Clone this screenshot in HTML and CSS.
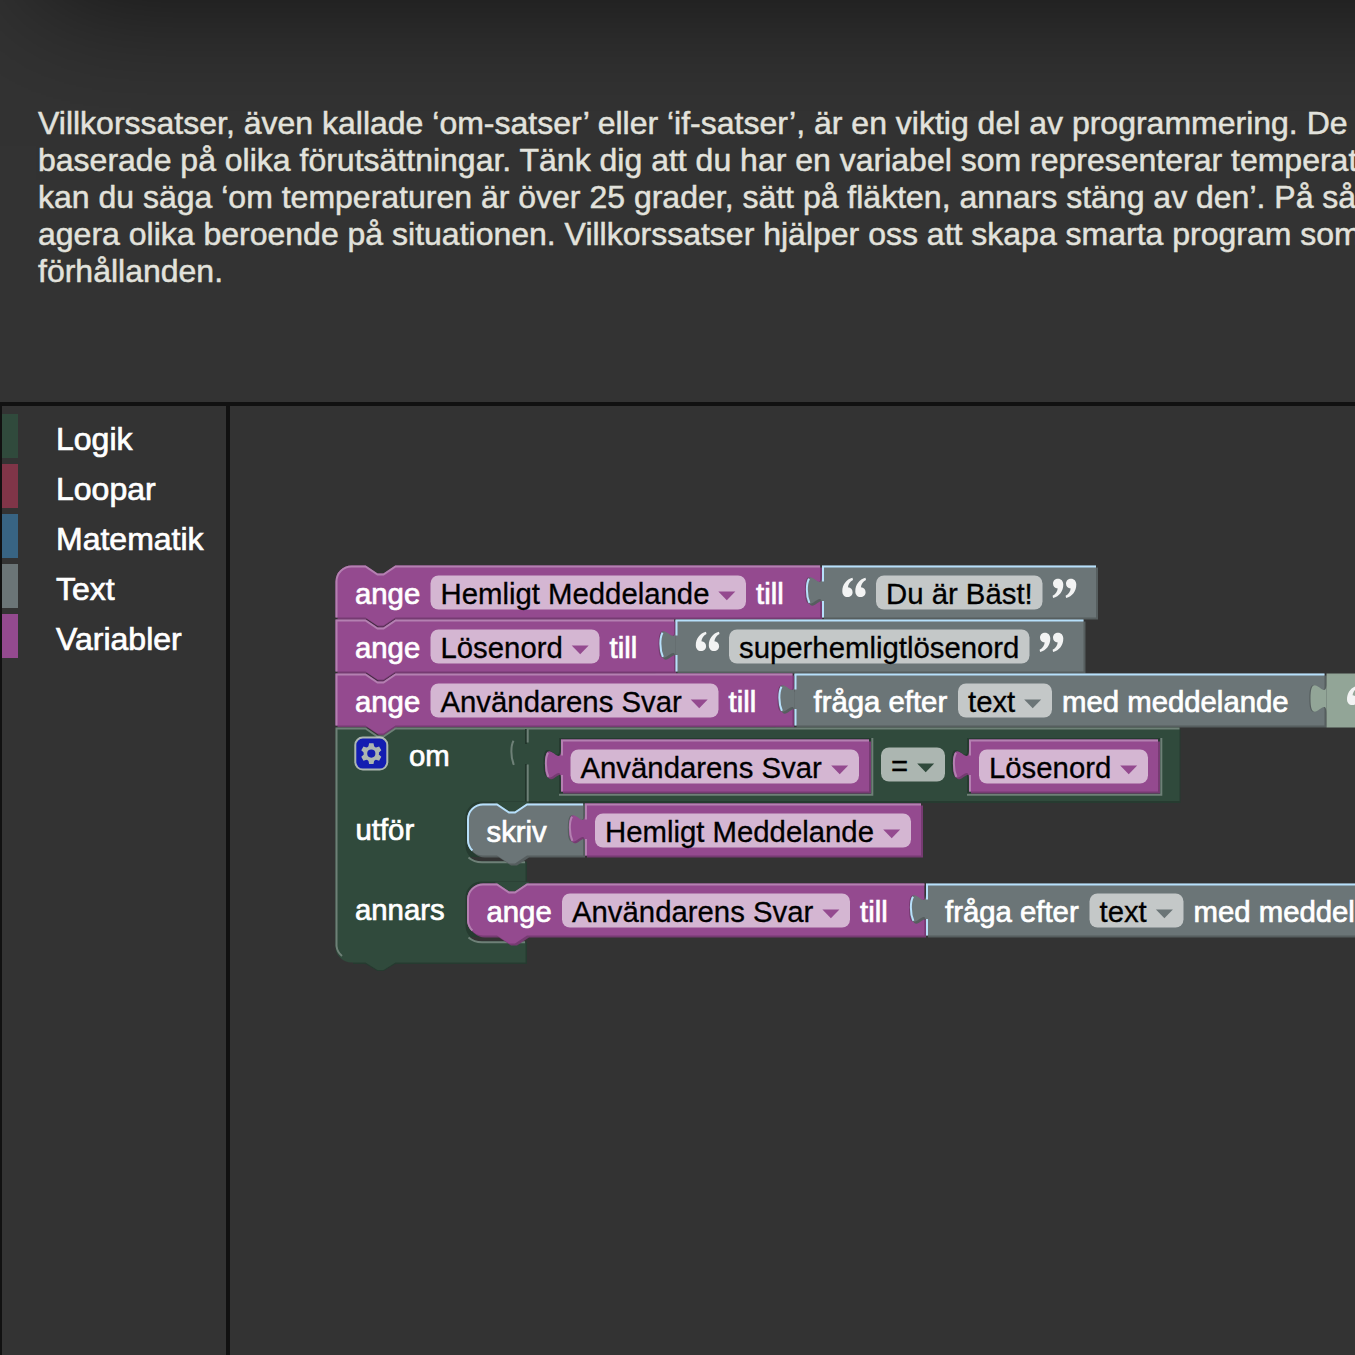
FILE: index.html
```html
<!DOCTYPE html>
<html lang="sv">
<head>
<meta charset="utf-8">
<title>Villkorssatser</title>
<link rel="stylesheet" href="styles.css">
</head>
<body>
<header class="intro">
  <p class="intro-text">Villkorssatser, även kallade ‘om-satser’ eller ‘if-satser’, är en viktig del av programmering. De<br>baserade på olika förutsättningar. Tänk dig att du har en variabel som representerar temperat<br>kan du säga ‘om temperaturen är över 25 grader, sätt på fläkten, annars stäng av den’. På så<br>agera olika beroende på situationen. Villkorssatser hjälper oss att skapa smarta program som<br>förhållanden.</p>
</header>
<main class="editor">
  <nav class="toolbox">
    <div class="category logic">Logik</div>
    <div class="category loops">Loopar</div>
    <div class="category math">Matematik</div>
    <div class="category strings">Text</div>
    <div class="category variables">Variabler</div>
  </nav>
  <svg class="workspace" viewBox="230 406 1125 949" width="1125" height="949">
    <defs>
      <path id="arrow" d="M0,0H17L8.5,8.7Z"/>
      <g id="quote">
        <path id="mark" d="M10.200,0C4,1.500,0,7,0,13.500C0,17,2.200,19.300,5.200,19.300C8.200,19.300,10.300,17.300,10.300,14.400C10.300,11.700,8.500,9.700,5.600,9.500C6,6.200,7.800,3.700,10.700,2.200Z"/>
        <use href="#mark" x="13"/>
      </g>
      <!-- left side of a value block: straight edges and the outer curve of the tab -->
      <path id="tab-light" d="M.5,26V17.800M.5,8V.5M-6.300,18.700C-8,15,-7.900,9,-6.500,6.600"/>
      <path id="tab" d="M0,5c0,10 -8,-8 -8,7.500s8,-2.500 8,7.500z"/>
    </defs>

    <!-- ange Hemligt Meddelande -->
    <g transform="translate(335.500 565.500) scale(2)">
      <path class="purple-dark" d="M1,20H243.300V27H31l-6,4h-3l-6,-4H1Z"/>
      <path class="purple-dark" d="M230,1H243.300V27H230Z"/>
      <path class="purple" d="M0,8A8,8 0 0 1 8,0H15l6,4h3l6,-4H242.300V26H30l-6,4h-3l-6,-4H0Z"/>
      <path class="line purple-line" d="M.5,26V8A7.500,7.500 0 0 1 8,.5H15l6,4h3l6,-4H242.300"/>
    </g>
    <g transform="translate(822 565.500) scale(2)">
      <use href="#tab" class="purple-dark" x="-.5" y="0"/>
      <path class="gray-dark" d="M1,1H138V27H1Z"/><use href="#tab" class="gray-dark" x="1" y="1"/>
      <path class="gray" d="M0,0H137V26H0Z"/><use href="#tab" class="gray"/>
      <path class="line gray-line" d="M0,.5H137"/><use href="#tab-light" class="line gray-line"/>
    </g>
    <!-- ange Lösenord -->
    <g transform="translate(335.500 619.500) scale(2)">
      <path class="purple-dark" d="M1,20H170.300V27H31l-6,4h-3l-6,-4H1Z"/>
      <path class="purple-dark" d="M160,1H170.300V27H160Z"/>
      <path class="seam" d="M15,0l6,4h3l6,-4"/>
      <path class="purple" d="M0,0H15l6,4h3l6,-4H169.300V26H30l-6,4h-3l-6,-4H0Z"/>
      <path class="line purple-line" d="M.5,26V.5H15l6,4h3l6,-4H169.300"/>
    </g>
    <g transform="translate(675.500 619.500) scale(2)">
      <use href="#tab" class="purple-dark" x="-.5" y="0"/>
      <path class="gray-dark" d="M1,1H205V27H1Z"/><use href="#tab" class="gray-dark" x="1" y="1"/>
      <path class="gray" d="M0,0H204V26H0Z"/><use href="#tab" class="gray"/>
      <path class="line gray-line" d="M0,.5H204"/><use href="#tab-light" class="line gray-line"/>
    </g>
    <!-- ange Användarens Svar -->
    <g transform="translate(335.500 673.500) scale(2)">
      <path class="purple-dark" d="M1,20H229.300V27H31l-6,4h-3l-6,-4H1Z"/>
      <path class="purple-dark" d="M220,1H229.300V27H220Z"/>
      <path class="seam" d="M15,0l6,4h3l6,-4"/>
      <path class="purple" d="M0,0H15l6,4h3l6,-4H228.500V26H30l-6,4h-3l-6,-4H0Z"/>
      <path class="line purple-line" d="M.5,26V.5H15l6,4h3l6,-4H228.500"/>
    </g>
    <g transform="translate(794.500 673.500) scale(2)">
      <use href="#tab" class="purple-dark" x="-.5" y="0"/>
      <path class="gray-dark" d="M1,1H266V27H1Z"/><use href="#tab" class="gray-dark" x="1" y="1"/>
      <path class="gray" d="M0,0H265V26H0Z"/><use href="#tab" class="gray"/>
      <path class="line gray-line" d="M0,.5H265"/><use href="#tab-light" class="line gray-line"/>
    </g>
    <g transform="translate(1326.500 673.500) scale(2)">
      <use href="#tab" class="gray-dark" x="-.6" y="0"/>
      <path class="shadow-block" d="M0,0H20V27H0Z"/><use href="#tab" class="shadow-block"/>
    </g>

    <!-- om / utför / annars -->
    <path class="green-dark" d="M1100,729.500H1180.500V803H527V964H395.500l-12,7h-6l-12,-7H353V800H1100Z"/>
    <path class="green" d="M335.500,727.500H365.500l12,8h6l12,-8H1179.500V801H525.500V962.500H395.500l-12,7.500h-6l-12,-7.500H351.500A16,16 0 0 1 335.500,946.500Z"/>
    <path class="line2 green-line" d="M342,956A15,15 0 0 1 336.500,946V728.500H365.500l12,8h6l12,-8H1179.500"/>
    <path class="seam2" d="M526,729V744M526,764V801"/>
    <g transform="translate(526.500 727.500) scale(2)">
      <path class="line green-line" d="M.6,37V18.500M.6,7.500V.5M-6.300,18.700C-8,15,-7.900,9,-6.500,6.600"/>
    </g>

    <path class="green-dark" d="M559,738H873V795H559Z"/>
    <path class="line2 green-line" d="M559,794.800H872.300V738"/>
    <path class="green-dark" d="M967,738H1162V795H967Z"/>
    <path class="line2 green-line" d="M967,794.800H1161.300V738"/>
    <g transform="translate(561 739.500) scale(2)">
      <use href="#tab" class="green-dark" x="-.8" y="-.6"/>
      <path class="purple-dark" d="M1,1H155V27H1Z"/><use href="#tab" class="purple-dark" x=".8" y=".8"/>
      <path class="purple" d="M0,0H154V26H0Z"/><use href="#tab" class="purple"/>
      <path class="line purple-line" d="M0,.5H154"/><use href="#tab-light" class="line purple-line"/>
    </g>
    <g transform="translate(969 739.500) scale(2)">
      <use href="#tab" class="green-dark" x="-.8" y="-.6"/>
      <path class="purple-dark" d="M1,1H95.500V27H1Z"/><use href="#tab" class="purple-dark" x=".8" y=".8"/>
      <path class="purple" d="M0,0H94.500V26H0Z"/><use href="#tab" class="purple"/>
      <path class="line purple-line" d="M0,.5H94.500"/><use href="#tab-light" class="line purple-line"/>
    </g>

    <!-- statement inputs -->
    <g id="slot">
      <path class="green-dark" d="M525.500,801.500H482A16,16 0 0 0 465.500,818V846A16,16 0 0 0 482,861.500H525.500Z"/>
      <path class="hole" d="M527,857H470Q474,861.500 484,861.500H527Z"/>
      <path class="line2 green-line" d="M468.500,857.500Q474,862.300 482,862.300H525"/>
      <path class="green" d="M495,802H529V810L512,814L497,806Z"/>
    </g>
    <use href="#slot" y="80"/>

    <g transform="translate(467 803.500) scale(2)">
      <path class="gray-dark" d="M1,18H59V27H31l-6,4h-3l-6,-4H9A8,8 0 0 1 1,19Z"/>
      <path class="gray" d="M0,8A8,8 0 0 1 8,0H15l6,4h3l6,-4H58V26H30l-6,4h-3l-6,-4H8A8,8 0 0 1 0,18Z"/>
      <path class="line gray-line" d="M2.700,23.500A7.500,7.500 0 0 1 .5,18V8A7.500,7.500 0 0 1 8,.5H15l6,4h3l6,-4H58"/>
    </g>
    <g transform="translate(585 803.500) scale(2)">
      <path class="gray-dark" d="M-1,0H0V26H-1Z"/>
      <use href="#tab" class="gray-dark" x="-.6" y="0"/>
      <path class="purple-dark" d="M1,1H169V27H1Z"/><use href="#tab" class="purple-dark" x=".8" y=".8"/>
      <path class="purple" d="M0,0H168V26H0Z"/><use href="#tab" class="purple"/>
      <path class="line purple-line" d="M0,.5H168"/><use href="#tab-light" class="line purple-line"/>
    </g>
    <g transform="translate(467 883.500) scale(2)">
      <path class="purple-dark" d="M1,18H229.500V27H31l-6,4h-3l-6,-4H9A8,8 0 0 1 1,19Z"/>
      <path class="purple" d="M0,8A8,8 0 0 1 8,0H15l6,4h3l6,-4H228.700V26H30l-6,4h-3l-6,-4H8A8,8 0 0 1 0,18Z"/>
      <path class="line purple-line" d="M2.700,23.500A7.500,7.500 0 0 1 .5,18V8A7.500,7.500 0 0 1 8,.5H15l6,4h3l6,-4H228.700"/>
    </g>
    <g transform="translate(926 883.500) scale(2)">
      <use href="#tab" class="purple-dark" x="-.5" y="0"/>
      <path class="gray-dark" d="M1,1H220V27H1Z"/><use href="#tab" class="gray-dark" x="1" y="1"/>
      <path class="gray" d="M0,0H220V26H0Z"/><use href="#tab" class="gray"/>
      <path class="line gray-line" d="M0,.5H220"/><use href="#tab-light" class="line gray-line"/>
    </g>

    <!-- mutator icon -->
    <g class="mutator">
      <rect class="mutator-box" x="355.300" y="737.600" width="32" height="32" rx="7.500"/>
      <g transform="translate(371.300 753.600)">
        <circle class="gear-ring" r="5.900"/>
        <g id="teeth"><path d="M-3,-6.500L-2.200,-10.300H2.200L3,-6.500ZM-3,6.500L-2.200,10.300H2.200L3,6.500Z"/></g>
        <use href="#teeth" transform="rotate(60)"/>
        <use href="#teeth" transform="rotate(120)"/>
      </g>
    </g>

    <!-- editable fields -->
    <g class="chips">
      <rect x="430.500" y="575.500" width="315.500" height="34" rx="8"/>
      <rect x="876" y="575.500" width="166.500" height="34" rx="8"/>
      <rect x="430.500" y="629.500" width="169" height="34" rx="8"/>
      <rect x="729" y="629.500" width="300.500" height="34" rx="8"/>
      <rect x="430.500" y="683.500" width="288" height="34" rx="8"/>
      <rect x="958" y="683.500" width="94" height="34" rx="8"/>
      <rect x="570.500" y="749.500" width="288.500" height="34" rx="8"/>
      <rect x="881" y="747.500" width="64" height="34" rx="8"/>
      <rect x="979" y="749.500" width="169" height="34" rx="8"/>
      <rect x="595" y="813.500" width="316" height="34" rx="8"/>
      <rect x="562" y="893.500" width="288" height="34" rx="8"/>
      <rect x="1089.500" y="893.500" width="94" height="34" rx="8"/>
    </g>
    <g class="purple">
      <use href="#arrow" x="718.300" y="591.500"/><use href="#arrow" x="571.700" y="645.500"/>
      <use href="#arrow" x="690.700" y="699.500"/><use href="#arrow" x="831.200" y="765.500"/>
      <use href="#arrow" x="1120.200" y="765.500"/><use href="#arrow" x="883.200" y="829.500"/>
      <use href="#arrow" x="822.400" y="909.500"/>
    </g>
    <g class="gray"><use href="#arrow" x="1024.200" y="699.500"/><use href="#arrow" x="1155.900" y="909.500"/></g>
    <use href="#arrow" class="green" x="917.200" y="763.500"/>
    <g class="quotes">
      <use href="#quote" x="842.300" y="577.800"/><use href="#quote" x="695.800" y="631.800"/><use href="#quote" x="1347" y="685.800"/>
      <use href="#quote" transform="translate(1076.300 598) rotate(180)"/>
      <use href="#quote" transform="translate(1063.300 652) rotate(180)"/>
    </g>

    <g class="label">
      <text x="355" y="603.500">ange</text><text x="756" y="603.500">till</text>
      <text x="355" y="657.500">ange</text><text x="609.500" y="657.500">till</text>
      <text x="355" y="711.500">ange</text><text x="728.500" y="711.500">till</text>
      <text x="813.500" y="711.500">fråga efter</text><text x="1062" y="711.500">med meddelande</text>
      <text x="409" y="765.500">om</text><text x="355.500" y="839.500">utför</text><text x="355" y="919.500">annars</text>
      <text x="486.500" y="841.500">skriv</text>
      <text x="486.500" y="921.500">ange</text><text x="860" y="921.500">till</text>
      <text x="945" y="921.500">fråga efter</text><text x="1193.500" y="921.500">med meddelande</text>
    </g>
    <g class="value">
      <text x="440.500" y="603.500">Hemligt Meddelande</text><text x="886" y="603.500">Du är Bäst!</text>
      <text x="440.500" y="657.500">Lösenord</text><text x="739" y="657.500">superhemligtlösenord</text>
      <text x="440.500" y="711.500">Användarens Svar</text><text x="968" y="711.500">text</text>
      <text x="580.500" y="777.500">Användarens Svar</text><text x="891" y="775.500">=</text><text x="989" y="777.500">Lösenord</text>
      <text x="605" y="841.500">Hemligt Meddelande</text>
      <text x="572" y="921.500">Användarens Svar</text><text x="1099.500" y="921.500">text</text>
    </g>
  </svg>
</main>
</body>
</html>
```
FILE: styles.css
```css
* { box-sizing: border-box; }
body {
  margin: 0;
  width: 1355px;
  height: 1355px;
  overflow: hidden;
  background: #333;
  font-family: "Liberation Sans", Arial, sans-serif;
}
.intro {
  position: relative;
  height: 402px;
  padding: 105px 0 0 38px;
  overflow: hidden;
}
.intro::before {
  content: "";
  position: absolute;
  left: 36px;
  top: -400px;
  width: 2400px;
  height: 400px;
  box-shadow: 0 0 120px rgba(0, 0, 0, 0.66);
}
.intro-text {
  position: relative;
  margin: 0;
  color: #e2e2dc;
  font-size: 32px;
  line-height: 37px;
  white-space: nowrap;
  -webkit-text-stroke: 0.5px #e2e2dc;
}
.editor {
  display: flex;
  height: 953px;
  border-top: 4px solid #111;
  border-left: 2px solid #111;
}
.toolbox {
  flex: 0 0 228px;
  display: flex;
  flex-direction: column;
  gap: 6px;
  padding-top: 8px;
  border-right: 4px solid #111;
}
.category {
  height: 44px;
  padding-left: 38px;
  border-left: 16px solid;
  color: #fff;
  font-size: 32px;
  line-height: 50px;
  -webkit-text-stroke: 0.7px #fff;
}
.logic { border-left-color: #304a3c; }
.loops { border-left-color: #803548; }
.math { border-left-color: #386483; }
.strings { border-left-color: #6b7577; }
.variables { border-left-color: #944a8f; }
.workspace { flex: none; display: block; }

.purple { fill: #944a8f; }
.purple-dark { fill: #763b72; }
.gray { fill: #6b7577; }
.gray-dark { fill: #565e5f; }
.green { fill: #304a3c; }
.green-dark { fill: #263b30; }
.shadow-block { fill: #92a597; }
.hole { fill: #333; }
.line { fill: none; stroke-width: 1; }
.line2 { fill: none; stroke-width: 2; }
.purple-line { stroke: #b480b1; }
.gray-line { stroke: #b7e0fb; }
.green-line { stroke: #6e8077; }
.seam { fill: none; stroke: #4d2b4b; stroke-width: 1; }
.seam2 { fill: none; stroke: #22352b; stroke-width: 2; }
.mutator { opacity: 0.6; fill: #fff; }
.mutator-box { fill: #00f; stroke: #fff; stroke-width: 2; }
.gear-ring { fill: none; stroke: #fff; stroke-width: 3.6; }
.chips { fill: #fff; fill-opacity: 0.6; }
.quotes { fill: #f2f3f3; }
.label, .value { font-size: 29.333px; }
.label { fill: #fff; stroke: #fff; stroke-width: 0.7; }
.value { fill: #000; stroke: #000; stroke-width: 0.3; }
```
